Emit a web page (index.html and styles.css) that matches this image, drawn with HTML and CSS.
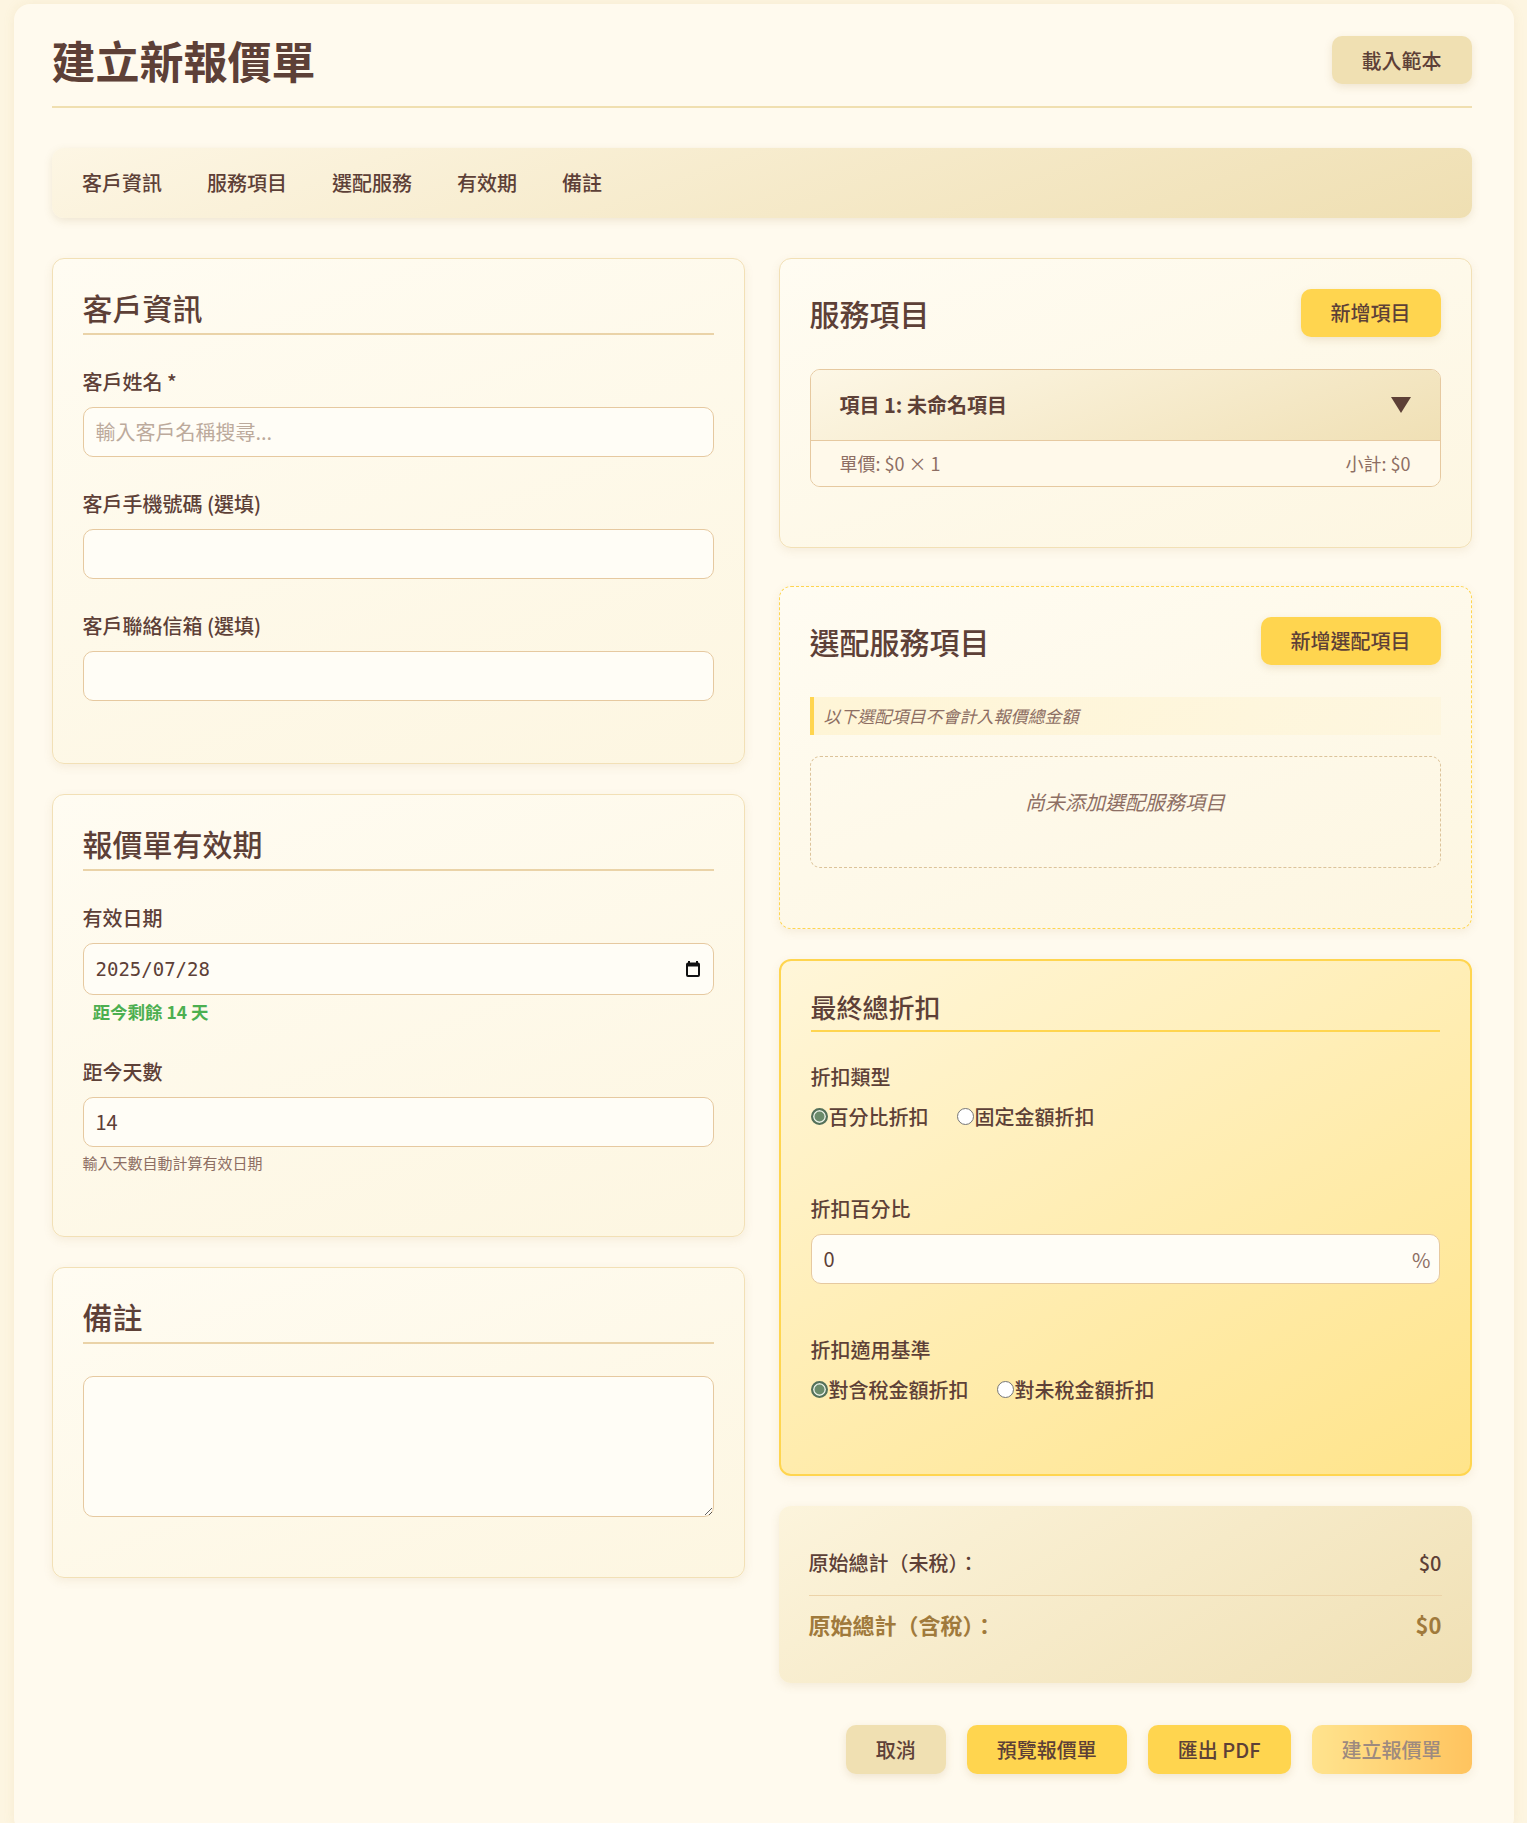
FILE: index.html
```html
<!DOCTYPE html>
<html lang="zh-Hant">
<head>
  <meta charset="UTF-8" />
  <meta name="viewport" content="width=device-width, initial-scale=1.0"/>
  <title>建立新報價單</title>
  <link rel="stylesheet" href="styles.css">
</head>
<body>

  <div class="page">
    <header class="page-header">
      <h1>建立新報價單</h1>
      <button class="btn btn-beige">載入範本</button>
    </header>

    <nav class="section-nav">
      <a href="#customer">客戶資訊</a>
      <a href="#services">服務項目</a>
      <a href="#optional">選配服務</a>
      <a href="#validity">有效期</a>
      <a href="#notes">備註</a>
    </nav>

    <div class="form-grid">
      <div class="col">
        <section class="card" id="customer">
          <h2>客戶資訊</h2>
          <div class="field">
            <label>客戶姓名 *</label>
            <input class="input" type="text" placeholder="輸入客戶名稱搜尋..." />
          </div>
          <div class="field">
            <label>客戶手機號碼 (選填)</label>
            <input class="input" type="text" />
          </div>
          <div class="field">
            <label>客戶聯絡信箱 (選填)</label>
            <input class="input" type="text" />
          </div>
        </section>

        <section class="card" id="validity">
          <h2>報價單有效期</h2>
          <div class="field">
            <label>有效日期</label>
            <div class="date-wrap">
              <input class="input input-date" type="text" value="2025/07/28" />
              <svg class="date-icon" width="14" height="16" viewBox="0 0 14 16">
                <rect x="2" y="0" width="2" height="3" fill="#111"/>
                <rect x="10" y="0" width="2" height="3" fill="#111"/>
                <rect x="1" y="2.5" width="12" height="12.5" rx="1" fill="none" stroke="#111" stroke-width="2"/>
                <rect x="1" y="2.5" width="12" height="3" fill="#111"/>
              </svg>
            </div>
            <div class="days-left">距今剩餘 14 天</div>
          </div>
          <div class="field">
            <label>距今天數</label>
            <input class="input" type="number" value="14" />
            <div class="hint">輸入天數自動計算有效日期</div>
          </div>
        </section>

        <section class="card" id="notes">
          <h2>備註</h2>
          <textarea class="input notes"></textarea>
        </section>
      </div>

      <div class="col">
        <section class="card" id="services">
          <div class="card-head">
            <h2>服務項目</h2>
            <button class="btn btn-yellow">新增項目</button>
          </div>
          <div class="item">
            <div class="item-head">
              <span>項目 1: 未命名項目</span>
              <svg width="20" height="16" viewBox="0 0 20 16"><polygon points="0,0 20,0 10,16" fill="#5d4037"/></svg>
            </div>
            <div class="item-foot">
              <span>單價: $0 × 1</span>
              <span>小計: $0</span>
            </div>
          </div>
        </section>

        <section class="card card-optional" id="optional">
          <div class="card-head">
            <h2>選配服務項目</h2>
            <button class="btn btn-yellow">新增選配項目</button>
          </div>
          <div class="note">以下選配項目不會計入報價總金額</div>
          <div class="empty">尚未添加選配服務項目</div>
        </section>

        <section class="card card-discount">
          <h2>最終總折扣</h2>
          <div class="field field-radio">
            <label>折扣類型</label>
            <div class="radios">
              <label class="radio"><input type="radio" name="dtype" checked />百分比折扣</label>
              <label class="radio"><input type="radio" name="dtype" />固定金額折扣</label>
            </div>
          </div>
          <div class="field field-percent">
            <label>折扣百分比</label>
            <div class="percent-wrap">
              <input class="input" type="text" value="0" />
              <span class="percent">%</span>
            </div>
          </div>
          <div class="field field-last">
            <label>折扣適用基準</label>
            <div class="radios">
              <label class="radio"><input type="radio" name="dbase" checked />對含稅金額折扣</label>
              <label class="radio"><input type="radio" name="dbase" />對未稅金額折扣</label>
            </div>
          </div>
        </section>

        <section class="summary">
          <div class="sum-row">
            <span>原始總計（未稅）：</span>
            <span>$0</span>
          </div>
          <div class="sum-row sum-total">
            <span>原始總計（含稅）：</span>
            <span>$0</span>
          </div>
        </section>
      </div>
    </div>

    <div class="actions">
      <button class="btn btn-beige">取消</button>
      <button class="btn btn-yellow">預覽報價單</button>
      <button class="btn btn-yellow">匯出 PDF</button>
      <button class="btn btn-submit" disabled>建立報價單</button>
    </div>
  </div>

</body>
</html>
```

FILE: styles.css
```css
body {
  margin: 0;
  padding: 4px 0 0;
  background: #fdf5e1;
  color: #5d4037;
  font-family: "Noto Sans CJK TC", "Noto Sans", sans-serif;
  font-size: 20px;
}
.page {
  max-width: 1500px;
  margin: 0 auto;
  padding: 30px 42px 60px 38px;
  box-sizing: border-box;
  background: #fffaee;
  border-radius: 16px;
  box-shadow: 0 0 12px rgba(200, 165, 90, 0.12);
}
.page-header {
  display: flex;
  justify-content: space-between;
  align-items: center;
  padding-bottom: 19px;
  border-bottom: 2px solid #f0dfb0;
  margin-bottom: 40px;
}
h1 {
  margin: 0;
  font-size: 44px;
  line-height: 1.2;
  font-weight: 700;
}
.btn {
  height: 48px;
  padding: 0 30px;
  border: none;
  border-radius: 10px;
  font-family: inherit;
  font-size: 20px;
  font-weight: 500;
  color: #5d4037;
  cursor: pointer;
  box-shadow: 0 3px 8px rgba(150, 110, 40, 0.15);
}
.btn-beige {
  background: #f0e0b2;
}
.btn-yellow {
  background: #ffd54f;
}
.btn-submit {
  background: linear-gradient(90deg, #ffd54f, #ffa000);
  opacity: 0.6;
}
.section-nav {
  display: flex;
  padding: 0 8px;
  margin-bottom: 40px;
  border-radius: 12px;
  background: linear-gradient(160deg, #fdf6e4, #efdfb2);
  box-shadow: 0 3px 8px rgba(150, 120, 60, 0.15);
}
.section-nav a {
  padding: 20px 22.5px;
  font-size: 20px;
  line-height: 30px;
  font-weight: 500;
  color: #5d4037;
  text-decoration: none;
}
.form-grid {
  display: grid;
  grid-template-columns: 1fr 1fr;
  gap: 34px;
  align-items: start;
}
.col {
  display: flex;
  flex-direction: column;
  gap: 30px;
}
.card {
  padding: 30px;
  background: linear-gradient(160deg, #fffcf2, #fdf6e1);
  border: 1px solid #f2e0b6;
  border-radius: 12px;
  box-shadow: 0 3px 10px rgba(160, 120, 60, 0.1);
}
.card h2 {
  margin: 0 0 32px;
  padding-bottom: 8px;
  border-bottom: 2px solid #ead3a8;
  font-size: 30px;
  line-height: 36px;
  font-weight: 500;
}
.field {
  margin-bottom: 32px;
}
.field > label {
  display: block;
  margin-bottom: 10px;
  font-size: 20px;
  line-height: 30px;
  font-weight: 500;
}
.input {
  display: block;
  width: 100%;
  height: 50px;
  box-sizing: border-box;
  padding: 0 12px;
  font-family: inherit;
  font-size: 20px;
  color: #5d4037;
  background: #fffdf6;
  border: 1px solid #e6c9a0;
  border-radius: 10px;
}
.input::placeholder {
  color: #bcaa9c;
}
.date-wrap, .percent-wrap {
  position: relative;
}
.input-date {
  height: 52px;
  font-family: "DejaVu Sans Mono", monospace;
  font-size: 19px;
}
.date-icon {
  position: absolute;
  right: 14px;
  top: 18px;
}
.days-left {
  margin-top: 4px;
  padding-left: 10px;
  font-size: 17.5px;
  line-height: 26px;
  font-weight: 700;
  color: #4caf50;
}
.hint {
  margin-top: 5px;
  font-size: 15px;
  line-height: 22px;
  color: #8d6e63;
}
.notes {
  height: 141px;
  padding: 12px;
  margin-bottom: 30px;
  resize: vertical;
}
.card-head {
  display: flex;
  justify-content: space-between;
  align-items: center;
  margin-bottom: 32px;
}
.card .card-head h2 {
  margin: 0;
  padding: 0;
  border: none;
}
.item {
  margin-bottom: 30px;
  border: 1px solid #e6c9a0;
  border-radius: 10px;
  overflow: hidden;
}
.item-head {
  display: flex;
  justify-content: space-between;
  align-items: center;
  padding: 20px 29px;
  font-size: 20px;
  line-height: 30px;
  font-weight: 700;
  background: linear-gradient(160deg, #fdf7e6, #f0e0b5);
  border-bottom: 1px solid #e6c9a0;
}
.item-foot {
  display: flex;
  justify-content: space-between;
  padding: 9px 29px;
  font-size: 18px;
  line-height: 27px;
  color: #8d6e63;
  background: #fff9ea;
}
.card-optional {
  margin-top: 8px;
  border: 1px dashed #ffd54f;
}
.note {
  padding: 6px 10px;
  margin-bottom: 21px;
  border-left: 4px solid #ffd54f;
  background: linear-gradient(90deg, rgba(255, 232, 160, 0.3), rgba(255, 232, 160, 0.12));
  font-size: 17px;
  line-height: 26px;
  font-style: italic;
  color: #8d6e63;
}
.empty {
  padding: 30px 40px 50px;
  margin-bottom: 30px;
  border: 1px dashed #dcc39a;
  border-radius: 10px;
  text-align: center;
  font-size: 20px;
  line-height: 30px;
  font-style: italic;
  color: #8d6e63;
}
.card-discount {
  border: 2px solid #ffd54f;
  background: linear-gradient(150deg, #fff6d9, #ffe48a);
}
.card-discount h2 {
  margin-bottom: 30px;
  font-size: 26px;
  line-height: 31px;
  border-bottom-color: #ffd54f;
}
.field-radio {
  margin-bottom: 62px;
}
.field-percent {
  margin-bottom: 51px;
}
.field-last {
  margin-bottom: 39px;
}
.radios {
  display: flex;
  gap: 28px;
  line-height: 30px;
}
.radio {
  display: inline-flex;
  align-items: center;
  font-size: 20px;
  font-weight: 500;
}
.radio input {
  appearance: none;
  width: 17px;
  height: 17px;
  margin: 0 1px 0 0;
  border: 1.5px solid #767676;
  border-radius: 50%;
  background: #fff;
  box-sizing: border-box;
}
.radio input:checked {
  border: 2px solid #54705a;
  background: #6b8b6b;
  box-shadow: inset 0 0 0 1.5px #e8efe6;
}
.percent {
  position: absolute;
  right: 9px;
  top: 11px;
  font-size: 20px;
  color: #8d6e63;
}
.summary {
  padding: 30px;
  border-radius: 12px;
  background: linear-gradient(150deg, #fcf4dc, #f0e0b4);
  box-shadow: 0 3px 10px rgba(160, 120, 60, 0.12);
}
.sum-row {
  display: flex;
  justify-content: space-between;
  padding: 12px 0 17px;
  font-size: 20px;
  line-height: 30px;
  font-weight: 500;
  border-bottom: 1px solid #ecd3a8;
}
.sum-total {
  padding: 12px 0;
  border-bottom: none;
  font-size: 22px;
  line-height: 33px;
  font-weight: 700;
  color: #a07a3c;
}
.actions {
  display: flex;
  justify-content: flex-end;
  gap: 21px;
  margin-top: 42px;
}
.actions .btn {
  height: 49px;
}
```
